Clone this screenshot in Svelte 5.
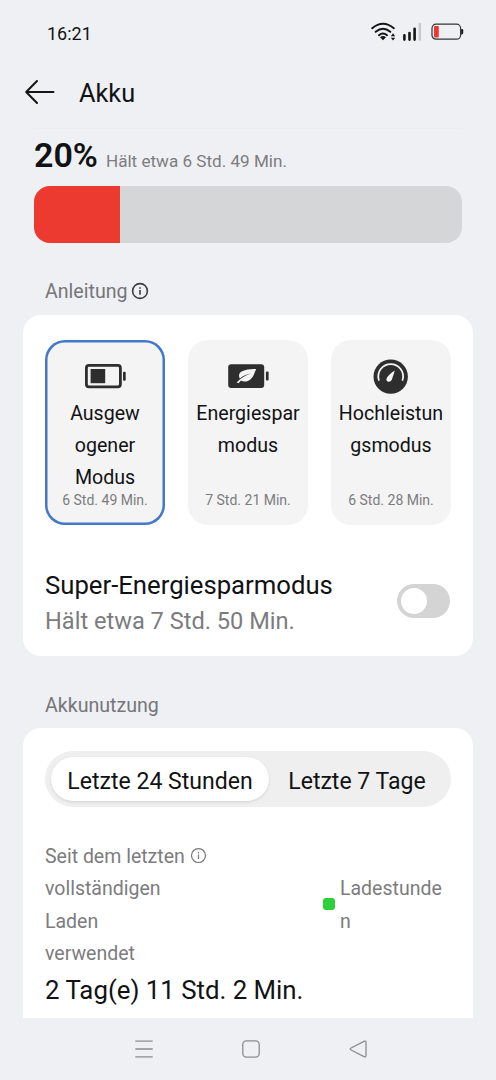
<script lang="ts">
  type Mode = {
    id: string;
    lines: string[];
    time: string;
  };

  const level = 20;

  const modes: Mode[] = [
    { id: 'balanced', lines: ['Ausgew', 'ogener', 'Modus'], time: '6 Std. 49 Min.' },
    { id: 'saver', lines: ['Energiespar', 'modus'], time: '7 Std. 21 Min.' },
    { id: 'performance', lines: ['Hochleistun', 'gsmodus'], time: '6 Std. 28 Min.' }
  ];

  const tabs = ['Letzte 24 Stunden', 'Letzte 7 Tage'];

  let selectedMode = $state('balanced');
  let superSaver = $state(false);
  let activeTab = $state(0);
</script>

{#snippet infoIcon()}
  <svg class="info-icon" viewBox="0 0 18 18">
    <circle cx="9" cy="9" r="7.4" />
    <path d="M9 8v4.8M9 5.2v1.6" />
  </svg>
{/snippet}

<div class="screen">
  <div class="status-bar">
    <span class="clock">16:21</span>
    <div class="status-icons">
      <svg class="wifi" width="26" height="20" viewBox="0 0 26 20">
        <path d="M1.2 6.2Q12 -2.7 22.8 6.2M4.7 9.8Q12 3.8 19.3 9.8M8 13.2Q12 9.8 16 13.2" />
        <path class="fill" d="M9 15.3Q12 12.8 15 15.3L12 18.3Z" />
        <path class="fill" d="M19.8 14.2L22 11.2L24.2 14.2ZM19.8 15.8L22 18.6L24.2 15.8Z" />
      </svg>
      <svg width="20" height="20" viewBox="0 0 20 20">
        <path class="bar" d="M2.4 13.2v4.4M7.5 11v6.6M12.6 6.8v10.8" />
        <path class="bar off" d="M17.8 2v15.6" />
      </svg>
      <svg class="battery" width="33" height="20" viewBox="0 0 33 20">
        <rect class="shell" x="1" y="2.2" width="28.6" height="15" rx="4" />
        <rect class="low" x="3" y="4.1" width="4.8" height="11.4" rx="1" />
        <path class="fill" d="M30.2 7h.7a1.3 1.3 0 0 1 1.3 1.3v2.8a1.3 1.3 0 0 1-1.3 1.3h-.7z" />
      </svg>
    </div>
  </div>

  <header class="header">
    <button class="back" aria-label="Zurück">
      <svg width="30" height="26" viewBox="0 0 30 26">
        <path d="M12 2L1.2 13L12 24M1.2 13H28.5" />
      </svg>
    </button>
    <h1>Akku</h1>
  </header>

  <section class="level">
    <div class="level-text">
      <span class="percent">{level}%</span>
      <span class="remaining">Hält etwa 6 Std. 49 Min.</span>
    </div>
    <div class="level-bar">
      <div class="level-fill" style="width: {level}%"></div>
    </div>
  </section>

  <div class="section-title guide">Anleitung{@render infoIcon()}</div>

  <section class="card modes-card">
    <div class="modes">
      {#each modes as mode (mode.id)}
        <button
          class="mode"
          class:selected={selectedMode === mode.id}
          onclick={() => (selectedMode = mode.id)}
        >
          <svg class="mode-icon" width="44" height="36" viewBox="0 0 44 36">
            {#if mode.id === 'balanced'}
              <rect class="outline" x="3.4" y="7.4" width="34" height="21.4" rx="2.5" />
              <rect x="7.6" y="11" width="14.6" height="14.2" />
              <rect x="40" y="13.7" width="2.7" height="9" rx="1" />
            {:else if mode.id === 'saver'}
              <rect x="2.2" y="6.3" width="36" height="23.6" rx="3" />
              <rect x="39.9" y="13.6" width="2.7" height="9" rx="1" />
              <path
                class="light"
                d="M30.2 10.9C23 11.2 13.3 11.4 13 17.4C12.9 18.7 13.3 19.6 13.9 20.4C17.2 17.4 20.7 16.1 24.8 15.4C19.8 17.3 14.4 20 10.7 24.6L12.5 25.2L15 22.4C17 23.7 21 24.3 24.1 21.8C28.2 18.6 28.2 14.8 30.2 10.9Z"
              />
            {:else}
              <circle cx="21.7" cy="18.6" r="17.2" />
              <path class="gauge" d="M9.8 22A12.4 12.4 0 1 1 33.6 22" />
              <path
                class="light"
                d="M25.7 12.6C23.2 14.2 18.8 17.8 17.6 20.6C16.8 22.6 18.1 23.9 19.9 23.8C21.5 23.7 22.6 22.6 23.1 21C24 18.2 25.2 15.4 25.7 12.6Z"
              />
            {/if}
          </svg>
          <span class="mode-name">
            {#each mode.lines as line}
              <span>{line}</span>
            {/each}
          </span>
          <span class="mode-time">{mode.time}</span>
        </button>
      {/each}
    </div>

    <div class="super-row">
      <div class="super-text">
        <div class="super-name">Super-Energiesparmodus</div>
        <div class="super-time">Hält etwa 7 Std. 50 Min.</div>
      </div>
      <button
        class="toggle"
        class:on={superSaver}
        role="switch"
        aria-checked={superSaver}
        aria-label="Super-Energiesparmodus"
        onclick={() => (superSaver = !superSaver)}
      >
        <span class="knob"></span>
      </button>
    </div>
  </section>

  <div class="section-title usage">Akkunutzung</div>

  <section class="card usage-card">
    <div class="tabs">
      {#each tabs as tab, i}
        <button class="tab" class:active={activeTab === i} onclick={() => (activeTab = i)}>
          {tab}
        </button>
      {/each}
    </div>

    <div class="stats">
      <div class="since">
        <div class="since-label">Seit dem letzten vollständigen Laden verwendet</div>
        {@render infoIcon()}
      </div>
      <div class="legend">
        <span class="dot"></span>
        <span class="legend-label">Ladestunden</span>
      </div>
    </div>
    <div class="total">2 Tag(e) 11 Std. 2 Min.</div>
  </section>

  <nav class="nav-bar">
    <svg width="20" height="20" viewBox="0 0 20 20">
      <path d="M1.3 2.2h17.4M1.3 10h17.4M1.3 17.8h17.4" />
    </svg>
    <svg width="20" height="20" viewBox="0 0 20 20">
      <rect x="1.8" y="1.8" width="16.4" height="16.4" rx="3.6" />
    </svg>
    <svg width="20" height="20" viewBox="0 0 20 20">
      <path d="M16 2.4Q18 1.5 18 3.4V16.6Q18 18.5 16 17.6L3.1 11Q1.3 10 3.1 9Z" />
    </svg>
  </nav>
</div>

<style>
  :global(body) {
    background: #eff0f3;
  }

  .screen {
    width: 496px;
    height: 1080px;
    box-sizing: border-box;
    display: flex;
    flex-direction: column;
    overflow: hidden;
    background: #eff0f3;
    color: #111214;
    font-family: Roboto, sans-serif;
  }

  svg {
    display: block;
    flex: none;
  }

  button {
    border: none;
    padding: 0;
    background: none;
    font: inherit;
    color: inherit;
    cursor: pointer;
  }

  .status-bar {
    height: 57px;
    padding: 10px 32px 0 47px;
    box-sizing: border-box;
    display: flex;
    justify-content: space-between;
    align-items: center;
  }

  .clock {
    font-size: 18px;
  }

  .status-icons {
    display: flex;
    margin-top: -3px;
  }

  .battery {
    margin-left: 9px;
  }

  .wifi {
    margin-right: 5px;
  }

  .status-icons path {
    fill: none;
    stroke: #151515;
    stroke-width: 2;
    stroke-linecap: round;
  }

  .status-icons .fill {
    fill: #151515;
    stroke: none;
  }

  .status-icons .bar {
    stroke-width: 2.6;
  }

  .status-icons .off {
    stroke: #c9cacc;
  }

  .shell {
    fill: none;
    stroke: #333;
    stroke-width: 1.2;
  }

  .low {
    fill: #ea3a30;
  }

  .header {
    height: 72px;
    padding-left: 25px;
    display: flex;
    align-items: center;
    gap: 24px;
    box-sizing: border-box;
  }

  .back {
    margin-top: -2px;
  }

  .back path {
    fill: none;
    stroke: #151515;
    stroke-width: 2;
    stroke-linecap: round;
    stroke-linejoin: round;
  }

  h1 {
    margin: 0;
    font-size: 25.3px;
    font-weight: 400;
  }

  .level {
    margin: -1px 34px 0;
    padding-top: 5px;
    border-top: 1px solid #ecedf0;
  }

  .level-text {
    height: 52px;
    display: flex;
    align-items: baseline;
    gap: 8px;
    line-height: 42px;
  }

  .percent {
    font-size: 34px;
    font-weight: 600;
  }

  .remaining {
    font-size: 17.1px;
    color: #7c7d80;
  }

  .level-bar {
    height: 57px;
    border-radius: 16px;
    overflow: hidden;
    background: #d5d6d8;
  }

  .level-fill {
    height: 100%;
    background: #ec3a30;
  }

  .section-title {
    padding-left: 45px;
    display: flex;
    align-items: center;
    font-size: 19.6px;
    line-height: 24px;
    color: #75767a;
  }

  .guide {
    margin: 37px 0 11px;
    gap: 3px;
  }

  .usage {
    margin: 38px 0 10px;
  }

  .info-icon {
    width: 18px;
    height: 18px;
    fill: none;
    stroke: #3a3b3d;
    stroke-width: 1.6;
  }

  .guide :global(.info-icon) {
    margin-top: -2px;
  }

  .card {
    margin: 0 23px;
    padding: 25px 22px 0;
    box-sizing: border-box;
    border-radius: 18px;
    background: #fff;
  }

  .modes-card {
    height: 341px;
  }

  .modes {
    display: grid;
    grid-template-columns: repeat(3, 120px);
    justify-content: space-between;
  }

  .mode {
    height: 185px;
    padding: 18px 0 16px;
    box-sizing: border-box;
    display: flex;
    flex-direction: column;
    align-items: center;
    border-radius: 20px;
    background: #f4f4f4;
  }

  .mode.selected {
    box-shadow: inset 0 0 0 2.5px #4379c8;
  }

  .mode-icon {
    fill: #2e2e2e;
  }

  .mode-icon .outline {
    fill: none;
    stroke: #2e2e2e;
    stroke-width: 2.8;
  }

  .mode-icon .light {
    fill: #f4f4f4;
  }

  .mode-icon .gauge {
    fill: none;
    stroke: #f4f4f4;
    stroke-width: 1.8;
    stroke-linecap: round;
  }

  .mode-name {
    height: 97px;
    margin-top: 4px;
    display: flex;
    flex-direction: column;
    align-items: center;
    font-size: 19.6px;
    line-height: 32.2px;
  }

  .mode-time {
    margin-top: -4px;
    font-size: 14px;
    line-height: 18px;
    color: #7c7c7e;
  }

  .super-row {
    height: 70px;
    margin-top: 41px;
    display: flex;
    justify-content: space-between;
    align-items: center;
  }

  .super-text {
    padding-top: 4px;
  }

  .super-name {
    font-size: 25.7px;
    line-height: 36px;
  }

  .super-time {
    font-size: 23.6px;
    line-height: 37px;
    color: #7c7c7e;
  }

  .toggle {
    width: 53px;
    height: 34px;
    margin-right: 1px;
    padding: 4px;
    display: flex;
    border-radius: 17px;
    background: #d4d4d5;
  }

  .toggle.on {
    justify-content: flex-end;
    background: #4379c8;
  }

  .knob {
    width: 26px;
    height: 26px;
    border-radius: 50%;
    background: #fff;
  }

  .usage-card {
    height: 290px;
    padding-top: 23px;
    border-radius: 18px 18px 0 0;
  }

  .tabs {
    height: 56px;
    padding: 6px;
    box-sizing: border-box;
    display: flex;
    border-radius: 28px;
    background: #efefef;
  }

  .tab {
    flex: 1;
    padding-top: 5px;
    border-radius: 22px;
    font-size: 23.05px;
  }

  .tab:first-child {
    flex: 0 0 218px;
  }

  .tab.active {
    background: #fff;
    box-shadow: 0 1px 3px rgba(0, 0, 0, 0.12);
  }

  .stats {
    margin-top: 34px;
    display: flex;
    justify-content: space-between;
    font-size: 19.5px;
    line-height: 32.3px;
    color: #7c7c7e;
  }

  .since {
    display: flex;
  }

  .since-label {
    width: 145px;
  }

  .since :global(.info-icon) {
    width: 17px;
    height: 17px;
    margin-top: 6px;
    stroke: #77787a;
    stroke-width: 1.3;
  }

  .legend {
    display: flex;
    align-items: center;
    gap: 5px;
  }

  .dot {
    width: 12px;
    height: 12px;
    margin-top: -3px;
    border-radius: 3px;
    background: #2bd03c;
  }

  .legend-label {
    width: 111px;
    word-break: break-all;
  }

  .total {
    margin-top: 2px;
    font-size: 25.8px;
    line-height: 36px;
  }

  .nav-bar {
    height: 62px;
    padding: 0 128px 0 134px;
    display: flex;
    align-items: center;
    justify-content: space-between;
  }

  .nav-bar svg {
    fill: none;
    stroke: #8b8c8f;
    stroke-width: 1.3;
  }
</style>
